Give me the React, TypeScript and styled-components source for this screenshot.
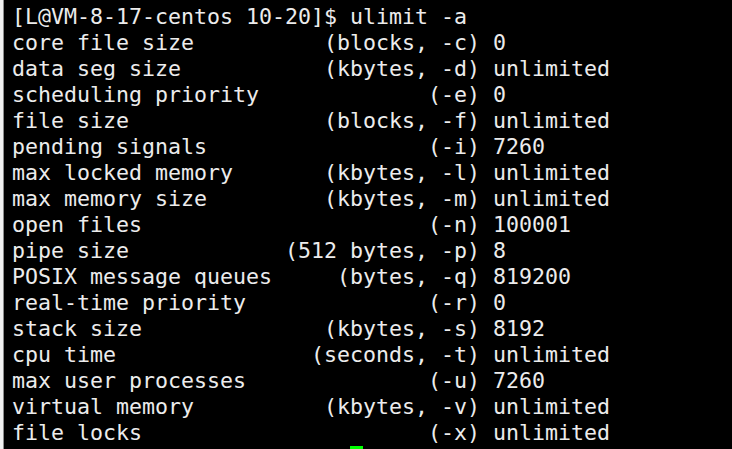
import React from "react";
import styled, { createGlobalStyle } from "styled-components";

const Global = createGlobalStyle`
  html, body {
    margin: 0;
    padding: 0;
    background: #000;
    height: 100%;
    overflow: hidden;
  }
  #root {
    height: 100%;
  }
`;

const Frame = styled.div`
  height: 449px;
  width: 732px;
  box-sizing: border-box;
  border-left: 3px solid #f0f0f0;
  background: #000;
  overflow: hidden;
`;

const Screen = styled.div`
  height: 100%;
  box-sizing: border-box;
  border-left: 1px solid #8c8c8c;
  padding: 4px 0 0 8px;
  background: #000;
`;

const Line = styled.div`
  font-family: "DejaVu Sans Mono", "Liberation Mono", monospace;
  font-size: 21.6px;
  line-height: 26px;
  height: 26px;
  color: #ececec;
  white-space: pre;
`;

const Cursor = styled.span`
  display: inline-block;
  width: 13px;
  height: 26px;
  vertical-align: top;
  background: #00ff00;
`;

const lines = [
  "[L@VM-8-17-centos 10-20]$ ulimit -a",
  "core file size          (blocks, -c) 0",
  "data seg size           (kbytes, -d) unlimited",
  "scheduling priority             (-e) 0",
  "file size               (blocks, -f) unlimited",
  "pending signals                 (-i) 7260",
  "max locked memory       (kbytes, -l) unlimited",
  "max memory size         (kbytes, -m) unlimited",
  "open files                      (-n) 100001",
  "pipe size            (512 bytes, -p) 8",
  "POSIX message queues     (bytes, -q) 819200",
  "real-time priority              (-r) 0",
  "stack size              (kbytes, -s) 8192",
  "cpu time               (seconds, -t) unlimited",
  "max user processes              (-u) 7260",
  "virtual memory          (kbytes, -v) unlimited",
  "file locks                      (-x) unlimited",
];

export default function App() {
  return (
    <>
      <Global />
      <Frame>
        <Screen>
          {lines.map((l, i) => (
            <Line key={i}>{l}</Line>
          ))}
          <Line>
            {" ".repeat(26)}
            <Cursor />
          </Line>
        </Screen>
      </Frame>
    </>
  );
}
